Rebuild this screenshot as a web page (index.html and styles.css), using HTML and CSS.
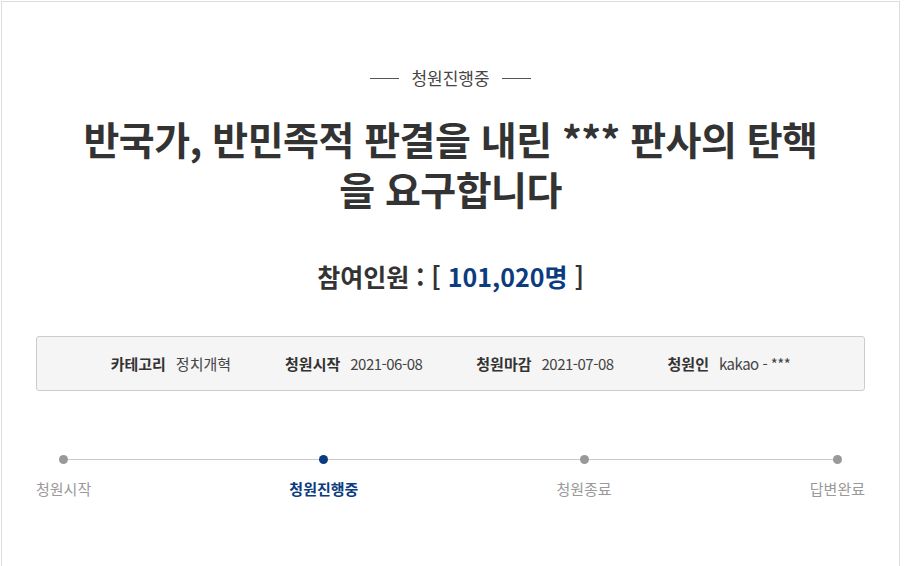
FILE: index.html
```html
<!DOCTYPE html>
<html lang="ko">
<head>
<meta charset="utf-8">
<link rel="stylesheet" href="styles.css">
</head>
<body>
<div class="page">
  <div class="status"><span class="dash"></span><span class="status-text">청원진행중</span><span class="dash"></span></div>
  <h1 class="title">반국가, 반민족적 판결을 내린 *** 판사의 탄핵을 요구합니다</h1>
  <div class="count">참여인원 : [ <span class="num">101,020명</span> ]</div>
  <div class="info">
    <div class="item"><b>카테고리</b><span>정치개혁</span></div>
    <div class="item"><b>청원시작</b><span class="val">2021-06-08</span></div>
    <div class="item"><b>청원마감</b><span class="val">2021-07-08</span></div>
    <div class="item"><b>청원인</b><span class="val">kakao - ***</span></div>
  </div>
  <div class="steps">
    <div class="track"></div>
    <div class="step"><i class="dot"></i><span>청원시작</span></div>
    <div class="step active"><i class="dot"></i><span>청원진행중</span></div>
    <div class="step"><i class="dot"></i><span>청원종료</span></div>
    <div class="step"><i class="dot"></i><span>답변완료</span></div>
  </div>
</div>
</body>
</html>
```
FILE: styles.css
```css
html, body { margin: 0; padding: 0; background: #fff; }
body { font-family: "Noto Sans CJK KR", "Noto Sans", sans-serif; color: #333; }
.page {
  margin: 1px 0 0 1px;
  width: 899px;
  height: 565px;
  overflow: hidden;
  border: 1px solid #ddd;
  border-bottom: none;
  padding: 0 34px;
  box-sizing: border-box;
}
.status {
  display: flex;
  justify-content: center;
  align-items: center;
  gap: 12px;
  margin-top: 62px;
  height: 28px;
}
.dash { width: 29px; height: 1px; background: #555; }
.status-text { font-size: 17px; color: #444; line-height: 28px; }
.title {
  margin: 21px auto 0;
  max-width: 760px;
  text-align: center;
  font-size: 39px;
  font-weight: 700;
  line-height: 50px;
  color: #333;
  letter-spacing: -0.5px;
}
.count {
  margin-top: 46px;
  text-align: center;
  font-size: 25px;
  font-weight: 700;
  line-height: 34px;
  color: #333;
}
.count .num { color: #0b3c80; }
.info {
  margin-top: 43px;
  height: 55px;
  box-sizing: border-box;
  background: #f5f5f5;
  border: 1px solid #ccc;
  border-radius: 3px;
  display: flex;
  justify-content: center;
  align-items: center;
  gap: 54px;
  font-size: 15px;
  color: #444;
}
.item b { font-weight: 700; color: #333; margin-right: 10px; }
.item .val { letter-spacing: -0.5px; }
.steps {
  position: relative;
  display: flex;
  justify-content: space-between;
  margin-top: 60px;
}
.track {
  position: absolute;
  left: 28px; right: 27px; top: 8px;
  height: 1px;
  background: #c8c8c8;
}
.step {
  position: relative;
  display: flex;
  flex-direction: column;
  align-items: center;
  font-size: 15px;
  color: #999;
}
.dot {
  display: block;
  width: 9px; height: 9px;
  border-radius: 50%;
  background: #999;
  margin-top: 4px;
}
.step span { margin-top: 14px; line-height: 22px; }
.step.active { color: #0b3c80; font-weight: 700; }
.step.active .dot { background: #0b3c80; }
```
